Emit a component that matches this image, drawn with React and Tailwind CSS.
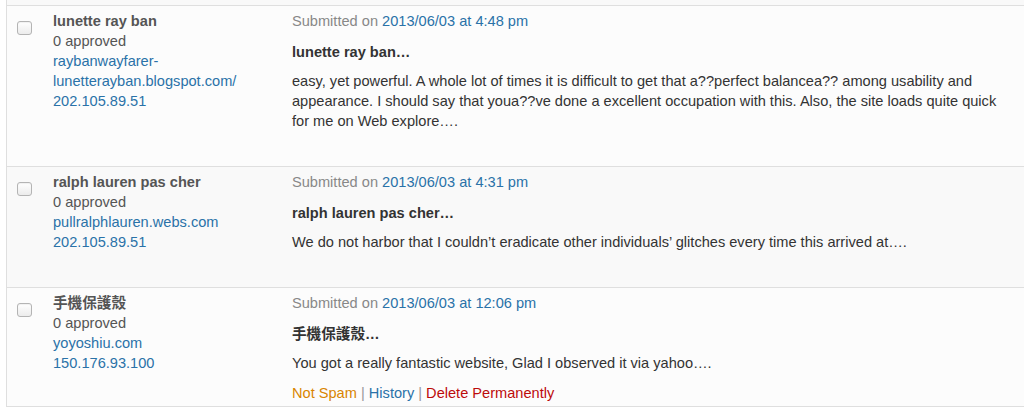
import React from "react";

const comments = [
  {
    id: 1,
    author: "lunette ray ban",
    approved: "0 approved",
    url: "raybanwayfarer-lunetterayban.blogspot.com/",
    ip: "202.105.89.51",
    date: "2013/06/03 at 4:48 pm",
    title: "lunette ray ban…",
    body:
      "easy, yet powerful. A whole lot of times it is difficult to get that a??perfect balancea?? among usability and appearance. I should say that youa??ve done a excellent occupation with this. Also, the site loads quite quick for me on Web explore….",
    bg: "bg-[#fcfcfc]",
  },
  {
    id: 2,
    author: "ralph lauren pas cher",
    approved: "0 approved",
    url: "pullralphlauren.webs.com",
    ip: "202.105.89.51",
    date: "2013/06/03 at 4:31 pm",
    title: "ralph lauren pas cher…",
    body:
      "We do not harbor that I couldn’t eradicate other individuals’ glitches every time this arrived at….",
    bg: "bg-[#f9f9f9]",
  },
  {
    id: 3,
    author: "手機保護殼",
    approved: "0 approved",
    url: "yoyoshiu.com",
    ip: "150.176.93.100",
    date: "2013/06/03 at 12:06 pm",
    title: "手機保護殼…",
    body: "You got a really fantastic website, Glad I observed it via yahoo….",
    bg: "bg-[#fcfcfc]",
    hovered: true,
  },
];

function CommentRow({ comment }) {
  return (
    <div
      className={`grid grid-cols-[46px_239px_1fr] border-t border-[#dfdfdf] ${comment.bg}`}
    >
      <div className="pl-[10px] pt-[15px]">
        <input
          type="checkbox"
          className="block appearance-none w-[15px] h-[14px] rounded-[3px] border border-[#b4b4b4] bg-gradient-to-b from-white to-[#ececec] shadow-[inset_0_1px_1px_rgba(0,0,0,0.06)]"
        />
      </div>

      <div className="pt-[5px] pr-[10px] leading-[20px] break-words">
        <div className="font-bold text-[#555]">{comment.author}</div>
        <div className="text-[#555]">{comment.approved}</div>
        <div className="text-[#2a72a8]">{comment.url}</div>
        <div className="text-[#2a72a8]">{comment.ip}</div>
      </div>

      <div className={`pt-[5px] pr-[10px] ${comment.hovered ? "pb-[3px]" : "pb-[5px]"}`}>
        <div className="leading-[20px] text-[#888]">
          Submitted on <span className="text-[#2a72a8]">{comment.date}</span>
        </div>
        <p className="mt-[11px] leading-[20px] font-bold text-[#333]">{comment.title}</p>
        <p className="mt-[9px] leading-[20px] text-[#333]">{comment.body}</p>
        <div
          className={`mt-[10px] leading-[20px] ${comment.hovered ? "" : "invisible"}`}
        >
          <span className="text-[#d98500]">Not Spam</span>
          <span className="text-[#999]"> | </span>
          <span className="text-[#2a72a8]">History</span>
          <span className="text-[#999]"> | </span>
          <span className="text-[#bc0b0b]">Delete Permanently</span>
        </div>
      </div>
    </div>
  );
}

export default function App() {
  return (
    <div
      className="w-[1024px] h-[407px] overflow-hidden bg-white text-[14.6px]"
      style={{ fontFamily: '"Liberation Sans", Arial, "Noto Sans CJK TC", sans-serif' }}
    >
      <div className="ml-[6px] border-l border-b border-[#dfdfdf]">
        <div className="h-[5px] bg-[#f9f9f9]"></div>
        {comments.map((comment) => (
          <CommentRow key={comment.id} comment={comment} />
        ))}
      </div>
    </div>
  );
}
